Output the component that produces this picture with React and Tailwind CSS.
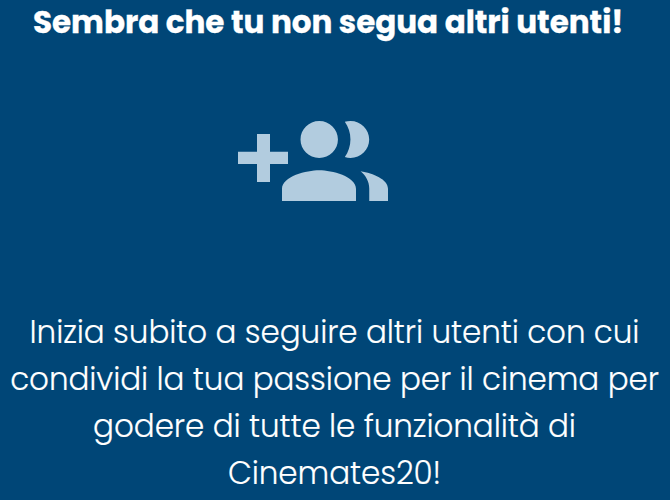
const lines = [
  'Inizia subito a seguire altri utenti con cui',
  'condividi la tua passione per il cinema per',
  'godere di tutte le funzionalità di',
  'Cinemates20!',
];

function GroupAddIcon() {
  return (
    <svg
      className="h-[80px] w-[150px] fill-[#b2ccdf]"
      viewBox="0 5 24 13"
      preserveAspectRatio="none"
      aria-hidden="true"
    >
      <path d="M8 10H5.12V7.11H3.04V10H0v2h3.04v2.91h2.08V12H8zm10 1c1.66 0 2.99-1.34 2.99-3S19.66 5 18 5c-.32 0-.63.05-.91.14.57.81.9 1.79.9 2.86s-.34 2.04-.9 2.86c.28.09.59.14.91.14zm-5 0c1.66 0 2.99-1.34 2.99-3S14.66 5 13 5c-1.66 0-3 1.34-3 3s1.34 3 3 3zm6.62 2.16c.83.73 1.38 1.66 1.38 2.84v2h3v-2c0-1.54-2.37-2.49-4.38-2.84zM13 13c-2 0-5.96 1-5.96 3v2H18.88v-2c0-2-3.88-3-5.88-3z" />
    </svg>
  );
}

export default function App() {
  return (
    <main className="flex h-[500px] w-[670px] flex-col overflow-hidden bg-[#004677] font-[Poppins,Inter,sans-serif] text-white">
      <h1 className="flex h-[44px] justify-start pl-[33px] text-[31px] leading-[44px] font-bold tracking-[-0.03px] whitespace-nowrap [-webkit-text-stroke:0.3px_white]">
        Sembra che tu non segua altri utenti!
      </h1>
      <div className="mt-[77px] ml-[238px] flex h-[80px]">
        <GroupAddIcon />
      </div>
      <p className="mt-[108px] flex flex-col items-center pr-px text-[31px] leading-[47px] font-light tracking-[-0.07px] whitespace-nowrap [-webkit-text-stroke:0.15px_white]">
        {lines.map((text) => (
          <span key={text} className="origin-[50%_73%] scale-y-[1.03]">{text}</span>
        ))}
      </p>
    </main>
  );
}
